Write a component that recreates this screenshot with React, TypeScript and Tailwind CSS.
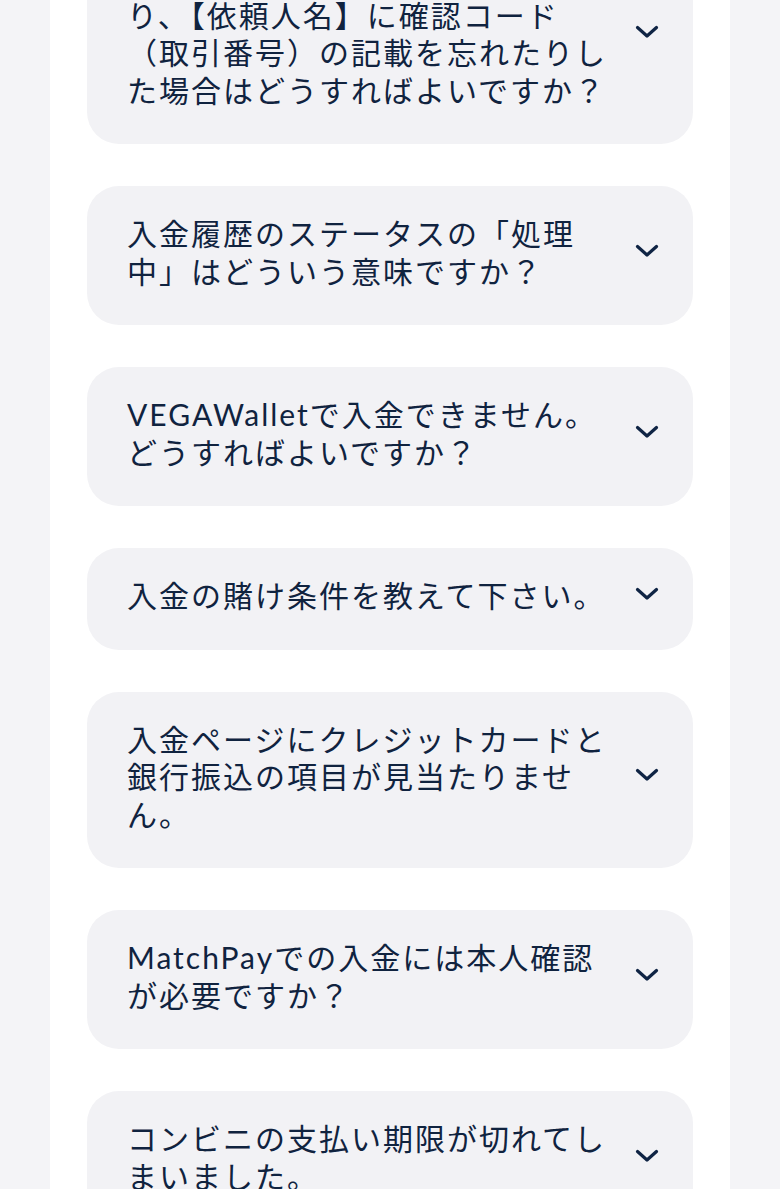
import React from "react";

const items: string[][] = [
  ["銀行振込で振込名義を誤った", "り、【依頼人名】に確認コード", "（取引番号）の記載を忘れたりし", "た場合はどうすればよいですか？"],
  ["入金履歴のステータスの「処理", "中」はどういう意味ですか？"],
  ["VEGAWalletで入金できません。", "どうすればよいですか？"],
  ["入金の賭け条件を教えて下さい。"],
  ["入金ページにクレジットカードと", "銀行振込の項目が見当たりませ", "ん。"],
  ["MatchPayでの入金には本人確認", "が必要ですか？"],
  ["コンビニの支払い期限が切れてし", "まいました。"],
];

function Chevron() {
  return (
    <svg width="24" height="24" viewBox="0 0 24 24" fill="none" className="shrink-0 -mt-[4px]">
      <path d="M2.5 7.5 L12 16 L21.5 7.5" stroke="#0f2444" strokeWidth="3.2" strokeLinecap="round" strokeLinejoin="round" />
    </svg>
  );
}

export default function App() {
  return (
    <div className="w-[780px] h-[1189px] overflow-hidden bg-[#f4f4f7]" style={{ fontFamily: 'Lato, "Noto Sans CJK JP", sans-serif' }}>
      <div className="mx-[50px] w-[680px] min-h-full bg-white px-[37px] pb-10">
        <div className="flex flex-col gap-[42px] -mt-[70px]">
          {items.map((lines, i) => (
            <div key={i} className="flex items-center justify-between gap-4 rounded-[32px] bg-[#f2f2f5] pl-10 pr-[34px] pt-[29px] pb-[35px]">
              <div className="text-[30px] leading-[37.5px] tracking-[2px] text-[#10233f]">
                {lines.map((l, j) => (
                  <div key={j} className="whitespace-nowrap">{l}</div>
                ))}
              </div>
              <Chevron />
            </div>
          ))}
        </div>
      </div>
    </div>
  );
}
